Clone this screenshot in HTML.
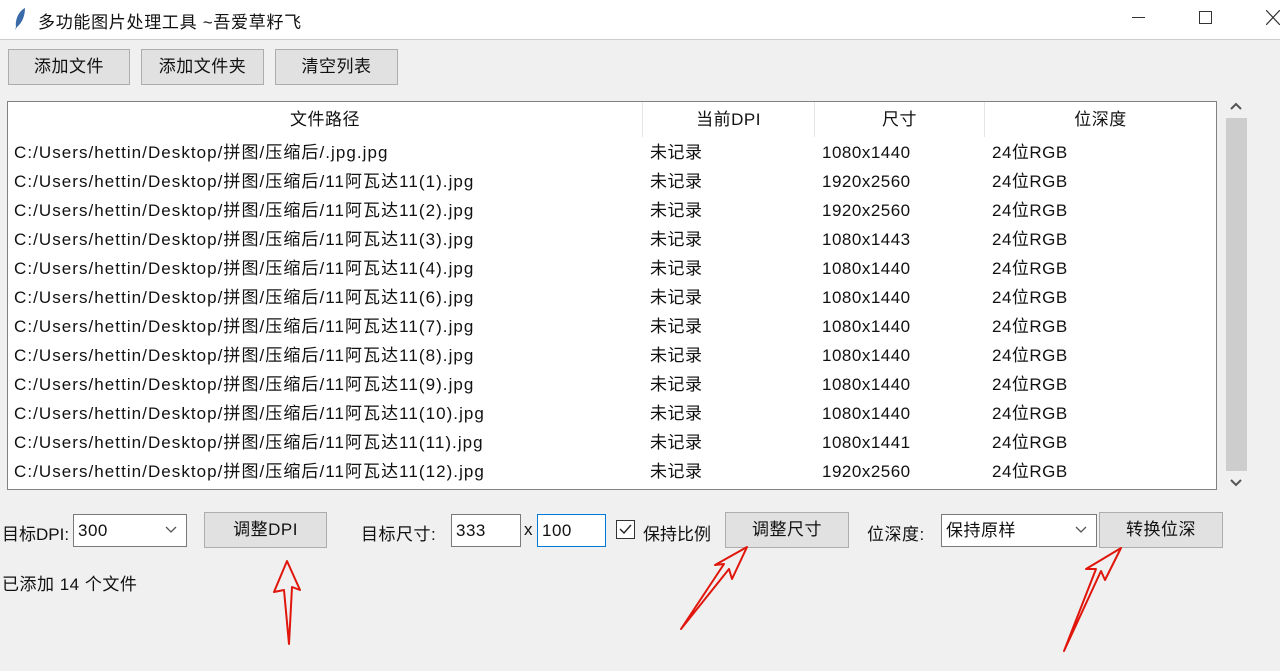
<!DOCTYPE html>
<html><head><meta charset="utf-8"><style>
*{margin:0;padding:0;box-sizing:border-box}
body{width:1280px;height:671px;background:#f0f0f0;font-family:"Liberation Sans","Noto Sans CJK SC",sans-serif;font-size:17px;color:#111;position:relative;overflow:hidden;letter-spacing:0.5px}
.a{position:absolute;white-space:nowrap}
.btn{position:absolute;background:#e1e1e1;border:1px solid #adadad;text-align:center;font-size:17px}
.ent{position:absolute;background:#fff;border:1px solid #7a7a7a;padding-left:4px;font-size:17px}
.row{position:absolute;left:14px;height:29px;line-height:29px;width:1200px}
.row span{position:absolute}
.row span:first-child{letter-spacing:1.05px}
</style></head><body>
<div class="a" style="left:0;top:0;width:1280px;height:40px;background:#fff;border-bottom:1px solid #ccc"></div>
<svg class="a" style="left:13px;top:7px" width="14" height="24" viewBox="0 0 14 24"><path d="M12 1 C6 4 2 12 3 20 L2 23 L4 20 C9 16 12 9 12 1Z" fill="#3a6aa8"/></svg>
<div class="a" style="left:38px;top:8px;font-size:17px;letter-spacing:0.7px">多功能图片处理工具 ~吾爱草籽飞</div>
<div class="a" style="left:1132px;top:17px;width:13px;height:1px;background:#333"></div>
<div class="a" style="left:1199px;top:11px;width:13px;height:13px;border:1px solid #333"></div>
<svg class="a" style="left:1266px;top:10px" width="14" height="15"><path d="M0 0L14 15M14 0L0 15" stroke="#333" stroke-width="1.2"/></svg>

<div class="btn" style="left:8px;top:49px;width:122px;height:36px;line-height:34px">添加文件</div>
<div class="btn" style="left:141px;top:49px;width:123px;height:36px;line-height:34px">添加文件夹</div>
<div class="btn" style="left:275px;top:49px;width:123px;height:36px;line-height:34px">清空列表</div>

<div class="a" style="left:7px;top:101px;width:1210px;height:389px;background:#fff;border:1px solid #828282"></div>
<div class="a" style="left:8px;top:102px;width:1208px;height:35px;line-height:35px">
<span class="a" style="left:0;width:634px;text-align:center">文件路径</span>
<span class="a" style="left:634px;width:172px;text-align:center;border-left:1px solid #e5e5e5;height:35px">当前DPI</span>
<span class="a" style="left:806px;width:170px;text-align:center;border-left:1px solid #e5e5e5;height:35px">尺寸</span>
<span class="a" style="left:976px;width:232px;text-align:center;border-left:1px solid #e5e5e5;height:35px">位深度</span>
</div>
<div class="row" style="top:138px"><span>C:/Users/hettin/Desktop/拼图/压缩后/.jpg.jpg</span><span style="left:636px">未记录</span><span style="left:808px">1080x1440</span><span style="left:978px">24位RGB</span></div>
<div class="row" style="top:167px"><span>C:/Users/hettin/Desktop/拼图/压缩后/11阿瓦达11(1).jpg</span><span style="left:636px">未记录</span><span style="left:808px">1920x2560</span><span style="left:978px">24位RGB</span></div>
<div class="row" style="top:196px"><span>C:/Users/hettin/Desktop/拼图/压缩后/11阿瓦达11(2).jpg</span><span style="left:636px">未记录</span><span style="left:808px">1920x2560</span><span style="left:978px">24位RGB</span></div>
<div class="row" style="top:225px"><span>C:/Users/hettin/Desktop/拼图/压缩后/11阿瓦达11(3).jpg</span><span style="left:636px">未记录</span><span style="left:808px">1080x1443</span><span style="left:978px">24位RGB</span></div>
<div class="row" style="top:254px"><span>C:/Users/hettin/Desktop/拼图/压缩后/11阿瓦达11(4).jpg</span><span style="left:636px">未记录</span><span style="left:808px">1080x1440</span><span style="left:978px">24位RGB</span></div>
<div class="row" style="top:283px"><span>C:/Users/hettin/Desktop/拼图/压缩后/11阿瓦达11(6).jpg</span><span style="left:636px">未记录</span><span style="left:808px">1080x1440</span><span style="left:978px">24位RGB</span></div>
<div class="row" style="top:312px"><span>C:/Users/hettin/Desktop/拼图/压缩后/11阿瓦达11(7).jpg</span><span style="left:636px">未记录</span><span style="left:808px">1080x1440</span><span style="left:978px">24位RGB</span></div>
<div class="row" style="top:341px"><span>C:/Users/hettin/Desktop/拼图/压缩后/11阿瓦达11(8).jpg</span><span style="left:636px">未记录</span><span style="left:808px">1080x1440</span><span style="left:978px">24位RGB</span></div>
<div class="row" style="top:370px"><span>C:/Users/hettin/Desktop/拼图/压缩后/11阿瓦达11(9).jpg</span><span style="left:636px">未记录</span><span style="left:808px">1080x1440</span><span style="left:978px">24位RGB</span></div>
<div class="row" style="top:399px"><span>C:/Users/hettin/Desktop/拼图/压缩后/11阿瓦达11(10).jpg</span><span style="left:636px">未记录</span><span style="left:808px">1080x1440</span><span style="left:978px">24位RGB</span></div>
<div class="row" style="top:428px"><span>C:/Users/hettin/Desktop/拼图/压缩后/11阿瓦达11(11).jpg</span><span style="left:636px">未记录</span><span style="left:808px">1080x1441</span><span style="left:978px">24位RGB</span></div>
<div class="row" style="top:457px"><span>C:/Users/hettin/Desktop/拼图/压缩后/11阿瓦达11(12).jpg</span><span style="left:636px">未记录</span><span style="left:808px">1920x2560</span><span style="left:978px">24位RGB</span></div>

<div class="a" style="left:1226px;top:118px;width:21px;height:353px;background:#cdcdcd"></div>
<svg class="a" style="left:1230px;top:102px" width="12" height="8"><path d="M1 7L6 2L11 7" stroke="#555" stroke-width="2" fill="none"/></svg>
<svg class="a" style="left:1230px;top:479px" width="12" height="8"><path d="M1 1L6 6L11 1" stroke="#555" stroke-width="2" fill="none"/></svg>

<div class="a" style="left:2px;top:520px;letter-spacing:0">目标DPI:</div>
<div class="ent" style="left:73px;top:514px;width:114px;height:33px;line-height:31px">300</div>
<svg class="a" style="left:165px;top:526px" width="12" height="8"><path d="M1 1L6 6L11 1" stroke="#555" stroke-width="1.3" fill="none"/></svg>
<div class="btn" style="left:204px;top:512px;width:123px;height:36px;line-height:34px">调整DPI</div>
<div class="a" style="left:361px;top:520px">目标尺寸:</div>
<div class="ent" style="left:451px;top:514px;width:70px;height:33px;line-height:31px">333</div>
<div class="a" style="left:524px;top:520px">x</div>
<div class="ent" style="left:537px;top:514px;width:69px;height:33px;line-height:31px;border-color:#0078d7">100</div>
<div class="a" style="left:616px;top:520px;width:19px;height:19px;border:1px solid #333;background:#fff"></div>
<svg class="a" style="left:618px;top:523px" width="15" height="13"><path d="M2 6L6 10L13 2" stroke="#222" stroke-width="1.4" fill="none"/></svg>
<div class="a" style="left:643px;top:520px;letter-spacing:0">保持比例</div>
<div class="btn" style="left:725px;top:512px;width:124px;height:36px;line-height:34px">调整尺寸</div>
<div class="a" style="left:867px;top:520px">位深度:</div>
<div class="ent" style="left:941px;top:514px;width:156px;height:33px;line-height:31px">保持原样</div>
<svg class="a" style="left:1075px;top:526px" width="12" height="8"><path d="M1 1L6 6L11 1" stroke="#555" stroke-width="1.3" fill="none"/></svg>
<div class="btn" style="left:1099px;top:512px;width:124px;height:36px;line-height:34px">转换位深</div>
<div class="a" style="left:2px;top:570px">已添加 14 个文件</div>

<svg class="a" style="left:0;top:0" width="1280" height="671" fill="none" stroke="#e0160c" stroke-width="2" stroke-linejoin="round">
<path d="M287 561 L300 590 L292 587 L289 644 L284 590 L274 592 Z"/>
<path d="M747 547 L732 579 L729 569 L681 629 L724 564 L715 565 Z"/>
<path d="M1121 548 L1105 580 L1101 571 L1064 651 L1096 569 L1086 569 Z"/>
</svg>
</body></html>
